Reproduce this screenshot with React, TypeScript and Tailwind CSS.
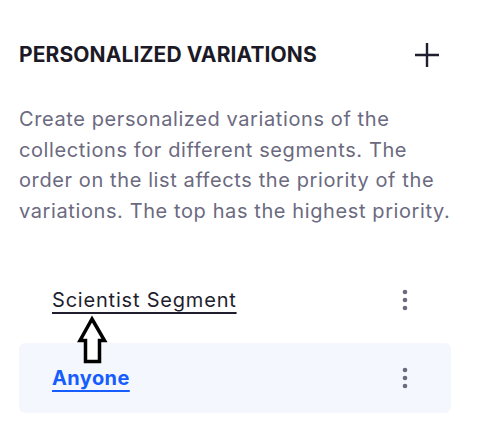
const font = { fontFamily: 'Inter, "Liberation Sans", sans-serif' };

function Dots() {
  return (
    <svg width="6" height="22" viewBox="0 0 6 22" className="text-[#6b6a80]">
      <circle cx="3" cy="3" r="2.3" fill="currentColor" />
      <circle cx="3" cy="11" r="2.3" fill="currentColor" />
      <circle cx="3" cy="19" r="2.3" fill="currentColor" />
    </svg>
  );
}

const variations = [
  { name: 'Scientist Segment', active: false },
  { name: 'Anyone', active: true },
];

export default function App() {
  return (
    <div className="relative w-[504px] h-[422px] bg-white pl-[19px] pr-[53px]" style={font}>
      {/* Header */}
      <div className="flex items-center justify-between pt-[41px]">
        <h2 className="text-[21px] leading-[28px] font-bold text-[#1b1a26] tracking-[0.005em]">
          PERSONALIZED VARIATIONS
        </h2>
        <button className="mr-[12px] text-[#1f1e2e]">
          <svg width="24" height="24" viewBox="0 0 24 24">
            <path d="M12 0v24M0 12h24" stroke="currentColor" strokeWidth="2.4" />
          </svg>
        </button>
      </div>

      <p className="mt-[35px] text-[20px] leading-[30.5px] text-[#6b6a80] tracking-[0.03em]">
        Create personalized variations of the collections for different segments. The order on the
        list affects the priority of the variations. The top has the highest priority.
      </p>

      {/* Variation list */}
      <ul className="mt-[39px] flex flex-col gap-[8px]">
        {variations.map((v) => (
          <li
            key={v.name}
            className={`flex items-center justify-between h-[70px] pl-[33px] pr-[43px] rounded-[6px] ${
              v.active ? 'bg-[#f4f7fd]' : ''
            }`}
          >
            <a
              href="#"
              className={`text-[20px] leading-[28px] underline decoration-2 underline-offset-[5px] ${
                v.active
                  ? 'font-bold text-[#175cff] tracking-[0.02em]'
                  : 'text-[#1f1e2e] tracking-[0.04em]'
              }`}
            >
              {v.name}
            </a>
            <Dots />
          </li>
        ))}
      </ul>

      {/* annotation arrow */}
      <svg
        className="absolute left-[76px] top-[313px]"
        width="34"
        height="54"
        viewBox="76 313 34 54"
      >
        <path
          d="M92 319 L104.5 340.5 L99.5 340.5 L99.5 361.5 L85.5 361.5 L85.5 340.5 L80 340.5 Z"
          fill="white"
          stroke="black"
          strokeWidth="3.5"
          strokeLinejoin="miter"
        />
      </svg>
    </div>
  );
}
